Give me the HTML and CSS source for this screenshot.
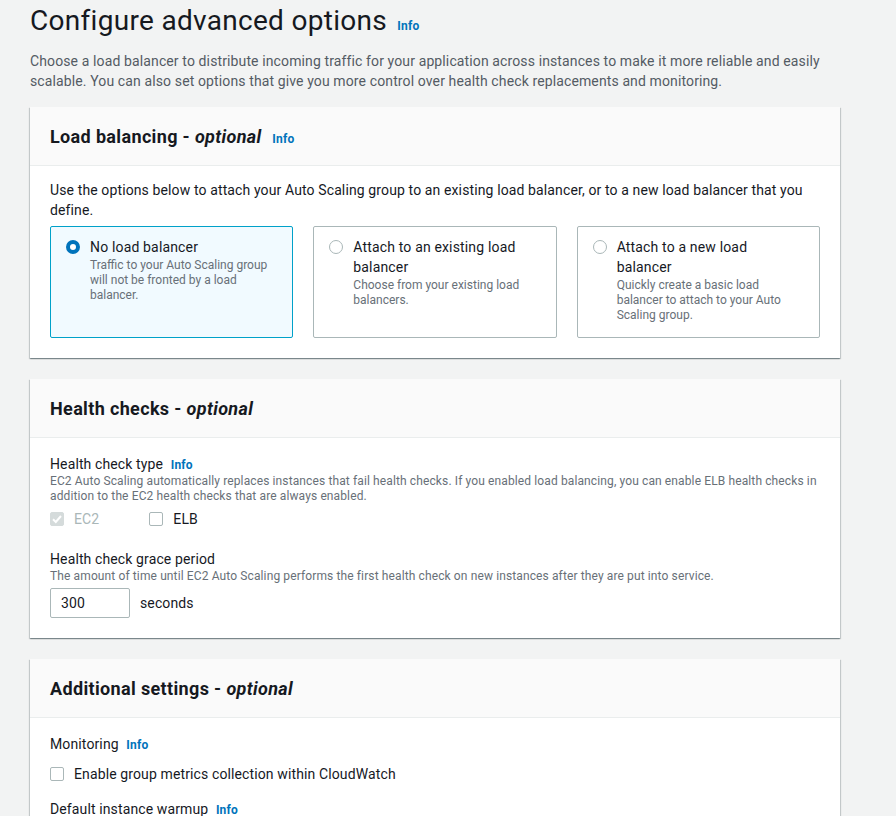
FILE: index.html
```html
<!DOCTYPE html>
<html lang="en">
<head>
<meta charset="utf-8">
<title>Configure advanced options</title>
<link rel="stylesheet" href="styles.css">
</head>
<body>
<main class="page">
  <header class="page-header">
    <h1 class="page-title">Configure advanced options <a class="info" href="#">Info</a></h1>
    <p class="page-desc">Choose a load balancer to distribute incoming traffic for your application across instances to make it more reliable and easily scalable. You can also set options that give you more control over health check replacements and monitoring.</p>
  </header>

  <section class="card">
    <div class="card-header">
      <h2 class="card-title">Load balancing - <em>optional</em> <a class="info" href="#">Info</a></h2>
    </div>
    <div class="card-body">
      <p class="body-text">Use the options below to attach your Auto Scaling group to an existing load balancer, or to a new load balancer that you define.</p>
      <div class="tiles">
        <label class="tile tile-selected">
          <span class="radio radio-on"></span>
          <span class="tile-text">
            <span class="tile-title">No load balancer</span>
            <span class="tile-desc">Traffic to your Auto Scaling group will not be fronted by a load balancer.</span>
          </span>
        </label>
        <label class="tile">
          <span class="radio"></span>
          <span class="tile-text">
            <span class="tile-title">Attach to an existing load balancer</span>
            <span class="tile-desc">Choose from your existing load balancers.</span>
          </span>
        </label>
        <label class="tile">
          <span class="radio"></span>
          <span class="tile-text">
            <span class="tile-title">Attach to a new load balancer</span>
            <span class="tile-desc">Quickly create a basic load balancer to attach to your Auto Scaling group.</span>
          </span>
        </label>
      </div>
    </div>
  </section>

  <section class="card">
    <div class="card-header">
      <h2 class="card-title">Health checks - <em>optional</em></h2>
    </div>
    <div class="card-body card-body-form">
      <div class="field">
        <div class="field-label">Health check type <a class="info" href="#">Info</a></div>
        <div class="field-desc">EC2 Auto Scaling automatically replaces instances that fail health checks. If you enabled load balancing, you can enable ELB health checks in addition to the EC2 health checks that are always enabled.</div>
        <div class="check-row">
          <label class="check check-disabled">
            <span class="box box-checked-disabled"><svg viewBox="0 0 14 14" width="14" height="14"><path d="M3 7.2 L5.8 10 L11 4" fill="none" stroke="#fff" stroke-width="2"/></svg></span>
            <span>EC2</span>
          </label>
          <label class="check">
            <span class="box"></span>
            <span>ELB</span>
          </label>
        </div>
      </div>
      <div class="field field-spaced">
        <div class="field-label">Health check grace period</div>
        <div class="field-desc">The amount of time until EC2 Auto Scaling performs the first health check on new instances after they are put into service.</div>
        <div class="input-row">
          <span class="input">300</span>
          <span class="unit">seconds</span>
        </div>
      </div>
    </div>
  </section>

  <section class="card">
    <div class="card-header">
      <h2 class="card-title">Additional settings - <em>optional</em></h2>
    </div>
    <div class="card-body card-body-form">
      <div class="field-label">Monitoring <a class="info" href="#">Info</a></div>
      <label class="check check-single">
        <span class="box"></span>
        <span>Enable group metrics collection within CloudWatch</span>
      </label>
      <div class="field-label field-gap">Default instance warmup <a class="info" href="#">Info</a></div>
    </div>
  </section>
</main>
</body>
</html>
```

FILE: styles.css
```css
* { box-sizing: border-box; }
html, body { margin: 0; padding: 0; }
body {
  background: #f2f3f3;
  font-family: Roboto, "Liberation Sans", sans-serif;
  color: #16191f;
  font-size: 14px;
  line-height: 20px;
  letter-spacing: 0.12px;
}
.page {
  width: 810px;
  margin-left: 30px;
}
.page-title {
  margin: 0;
  font-size: 28px;
  line-height: 41px;
  font-weight: 400;
  letter-spacing: 0.3px;
  color: #16191f;
}
.info {
  font-size: 12px;
  font-weight: 700;
  color: #0073bb;
  text-decoration: none;
  margin-left: 4px;
  line-height: 1;
  letter-spacing: 0.2px;
}
.page-title .info { margin-left: 3px; }
.page-desc {
  margin: 10px 0 0 0;
  color: #545b64;
  font-size: 14px;
  line-height: 20px;
}
.card {
  background: #fff;
  margin-top: 16px;
  box-shadow: 0 1px 1px 0 rgba(0,28,36,.3), 1px 1px 1px 0 rgba(0,28,36,.15), -1px 1px 1px 0 rgba(0,28,36,.15);
}
.card + .card { margin-top: 21px; }
.card-header {
  background: #fafafa;
  border-bottom: 1px solid #eaeded;
  padding: 19px 20px 17px;
}
.card-title {
  margin: 0;
  font-size: 18px;
  line-height: 22px;
  font-weight: 700;
  letter-spacing: 0.35px;
}
.card-title em { font-style: italic; font-weight: 700; }
.card-title .info { margin-left: 6px; }
.card-body {
  padding: 14px 20px 20px;
}
.card-body-form { padding-top: 16px; }
.body-text { margin: 0; }
.tiles {
  display: grid;
  grid-template-columns: 1fr 1fr 1fr;
  gap: 20px;
  margin-top: 6px;
}
.tile {
  display: flex;
  align-items: flex-start;
  border: 1px solid #aab7b8;
  border-radius: 2px;
  padding: 10px 16px 14px 15px;
  min-height: 111px;
  background: #fff;
}
.tile-selected {
  border-color: #00a1c9;
  background: #f1faff;
}
.radio {
  flex: none;
  width: 14px;
  height: 14px;
  border-radius: 50%;
  border: 1px solid #aab7b8;
  background: #fff;
  margin-top: 3px;
  margin-right: 10px;
}
.radio-on {
  border: 4px solid #0073bb;
  background: #fff;
}
.tile-text { display: flex; flex-direction: column; }
.tile-title { font-size: 14px; line-height: 20px; color: #16191f; letter-spacing: 0.16px; }
.tile-desc { font-size: 12px; line-height: 15px; color: #687078; margin-top: 1px; letter-spacing: 0; }
.field-label { font-size: 14px; line-height: 20px; }
.field-desc { font-size: 12px; line-height: 15px; color: #687078; }
.check-row {
  display: flex;
  gap: 50px;
  margin-top: 5px;
}
.check {
  display: flex;
  align-items: center;
  gap: 10px;
  line-height: 20px;
}
.check-disabled { color: #aab7b8; }
.box {
  width: 14px;
  height: 14px;
  border: 1px solid #aab7b8;
  border-radius: 2px;
  background: #fff;
  display: block;
}
.box-checked-disabled {
  background: #d5dbdb;
  border-color: #d5dbdb;
}
.box svg { display: block; margin: -1px; }
.field-spaced { margin-top: 20px; }
.input-row {
  display: flex;
  align-items: center;
  gap: 10px;
  margin-top: 4px;
}
.input {
  width: 80px;
  height: 30px;
  border: 1px solid #aab7b8;
  border-radius: 2px;
  padding: 0 10px;
  line-height: 28px;
  background: #fff;
}
.check-single { margin-top: 10px; }
.field-gap { margin-top: 15px; }
```
